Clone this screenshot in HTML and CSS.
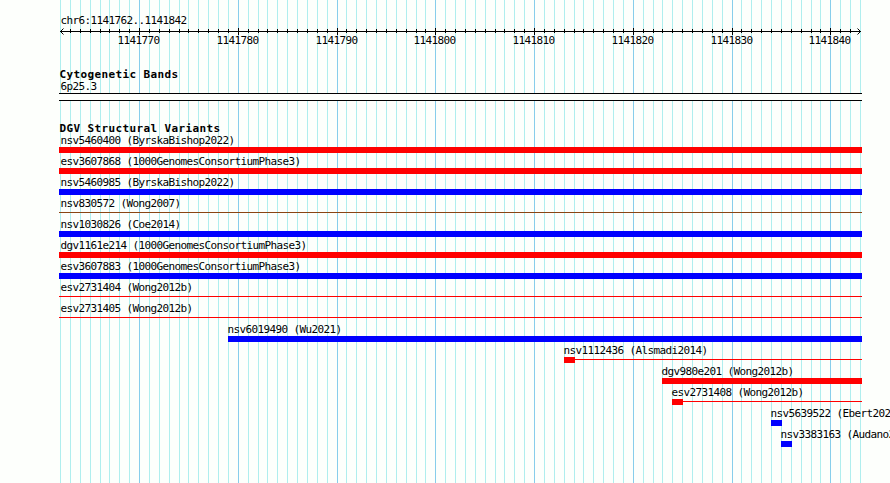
FILE: index.html
```
<!DOCTYPE html>
<html lang="en">
<head>
  <meta charset="UTF-8">
  <title>chr6:1141762..1141842</title>
  <link rel="stylesheet" href="styles.css">
</head>
<body>
  <div class="browser">
    <svg class="grid" id="grid" width="890" height="483" shape-rendering="crispEdges"></svg>

    <div class="ruler">
      <div class="region">chr6:1141762..1141842</div>
      <svg class="axis" id="axis" width="890" height="22">
        <rect x="60" y="5" width="801" height="1"/>
        <path d="M63.5 2.5 L60.5 5.5 L63.5 8.5 M857.5 2.5 L860.5 5.5 L857.5 8.5"/>
      </svg>
    </div>

    <section class="track cytobands">
      <h2>Cytogenetic Bands</h2>
      <div class="band-name">6p25.3</div>
      <div class="band"></div>
    </section>

    <section class="track">
      <h2>DGV Structural Variants</h2>
      <div id="variants"></div>
    </section>
  </div>

  <script>
    const START = 1141762;
    const END = 1141842;
    const LEFT = 60;
    const STEP = 800 / 81;
    const RIGHT = 862;

    const variants = [
      { name: 'nsv5460400 (ByrskaBishop2022)', type: 'loss' },
      { name: 'esv3607868 (1000GenomesConsortiumPhase3)', type: 'loss' },
      { name: 'nsv5460985 (ByrskaBishop2022)', type: 'gain' },
      { name: 'nsv830572 (Wong2007)', type: 'complex thin' },
      { name: 'nsv1030826 (Coe2014)', type: 'gain' },
      { name: 'dgv1161e214 (1000GenomesConsortiumPhase3)', type: 'loss' },
      { name: 'esv3607883 (1000GenomesConsortiumPhase3)', type: 'gain' },
      { name: 'esv2731404 (Wong2012b)', type: 'loss thin' },
      { name: 'esv2731405 (Wong2012b)', type: 'loss thin' },
      { name: 'nsv6019490 (Wu2021)', type: 'gain', start: 1141779 },
      { name: 'nsv1112436 (Alsmadi2014)', type: 'loss capped', start: 1141813 },
      { name: 'dgv980e201 (Wong2012b)', type: 'loss', start: 1141823 },
      { name: 'esv2731408 (Wong2012b)', type: 'loss capped', start: 1141824 },
      { name: 'nsv5639522 (Ebert2020)', type: 'gain', start: 1141834, width: 11 },
      { name: 'nsv3383163 (Audano2019)', type: 'gain', start: 1141835, width: 11 }
    ];

    const position = base => Math.round(LEFT + (base - START) * STEP);

    function add(parent, tag, attrs) {
      const el = document.createElementNS('http://www.w3.org/2000/svg', tag);
      for (const key in attrs) el.setAttribute(key, attrs[key]);
      parent.appendChild(el);
      return el;
    }

    // Grid lines and ruler ticks
    const grid = document.getElementById('grid');
    const axis = document.getElementById('axis');
    for (let base = START; base <= END + 1; base++) {
      const x = position(base);
      const major = base % 10 === 0;
      add(grid, 'rect', { x: x, y: 0, width: 1, height: 483, class: major ? 'major' : 'minor' });
      if (base === START || base > END) continue;
      add(axis, 'rect', { x: x, y: major ? 2 : 3, width: 1, height: major ? 7 : 4 });
      if (major) add(axis, 'text', { x: x - 21.5, y: 18 }).textContent = base;
    }

    // Variant rows
    const list = document.getElementById('variants');
    variants.forEach(v => {
      const left = v.start ? position(v.start) : 59;
      const row = document.createElement('div');
      row.className = 'variant';
      row.style.paddingLeft = left + 'px';

      const label = document.createElement('div');
      label.className = v.start ? 'label' : 'label from-edge';
      label.textContent = v.name;

      const bar = document.createElement('div');
      bar.className = 'bar ' + v.type;
      bar.style.width = (v.width || RIGHT - left) + 'px';

      row.append(label, bar);
      list.appendChild(row);
    });
  </script>
</body>
</html>
```
FILE: styles.css
```
body {
  margin: 0;
  background: #fdfffc;
  color: #000;
  font-family: "DejaVu Sans Mono", monospace;
  font-size: 11px;
  line-height: 17px;
  letter-spacing: -0.622px;
}

.browser {
  position: relative;
  width: 890px;
  height: 483px;
  overflow: hidden;
  white-space: nowrap;
}

.grid {
  position: absolute;
  top: 0;
  left: 0;
  z-index: -1;
}

.minor {
  fill: #afeeee;
}

.major {
  fill: #87ceeb;
}

.ruler {
  height: 66px;
  padding-top: 13px;
  box-sizing: border-box;
}

.region {
  height: 13px;
  padding-left: 60.5px;
  line-height: 15px;
}

.axis {
  display: block;
}

.axis path {
  fill: none;
  stroke: #000;
}

h2 {
  margin: 0;
  padding-left: 59.5px;
  height: 12px;
  font-size: 11px;
  font-weight: bold;
  letter-spacing: 0.378px;
}

.cytobands {
  height: 54px;
}

.band-name {
  height: 15px;
  padding-left: 60.5px;
}

.band {
  width: 803px;
  height: 8px;
  margin-left: 59px;
  box-sizing: border-box;
  border-top: 1px solid #000;
  border-bottom: 1px solid #000;
  background: #fdfffc;
}

.label {
  height: 15px;
  margin-left: -0.5px;
}

.from-edge {
  margin-left: 1.5px;
}

.bar {
  height: 6px;
}

.loss {
  background: #f00;
}

.gain {
  background: #00f;
}

.complex {
  background: #8b4513;
}

.thin {
  height: 1px;
  margin: 2px 0 3px;
}

.capped {
  background:
    linear-gradient(#f00, #f00) 0 0 / 11px 6px no-repeat,
    linear-gradient(#f00, #f00) 0 2px / 100% 1px no-repeat;
}
```
